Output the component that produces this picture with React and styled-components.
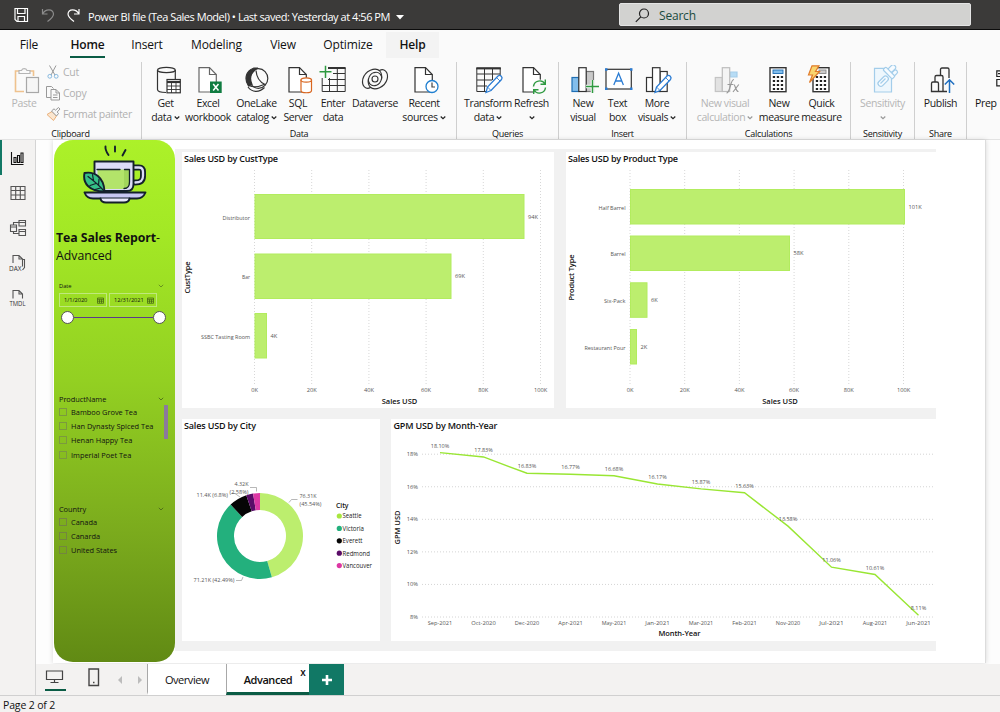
import React from "react";
import styled, { createGlobalStyle, css } from "styled-components";

const GlobalStyle = createGlobalStyle`
  * {
    box-sizing: border-box;
  }

  body {
    margin: 0;
    overflow: hidden;
    background: #f3f2f1;
    color: #111;
    font-family: "Open Sans", "Noto Sans", sans-serif;
  }
`;

const Window = styled.div`
  display: flex;
  flex-direction: column;
  width: 1000px;
  height: 712px;
  overflow: hidden;
`;

/* title bar */

const TitleBar = styled.header`
  display: flex;
  align-items: flex-start;
  flex: none;
  height: 30px;
  padding: 3px 0 0 13px;
  background: #3b3a39;
  border-bottom: 1px solid #0c0c0c;
  color: #fff;
`;

const TitleIcons = styled.div`
  display: flex;
  align-items: center;
  width: 75px;
  height: 24px;
`;

const FileName = styled.div`
  display: flex;
  align-items: center;
  gap: 6px;
  width: 531px;
  padding-top: 2px;
  line-height: 24px;
  font-size: 11px;
  letter-spacing: -0.46px;
  white-space: nowrap;
`;

const Search = styled.div`
  display: flex;
  align-items: center;
  gap: 9px;
  width: 352px;
  height: 23px;
  padding: 1px 0 0 15px;
  border: 1px solid #e4e4e4;
  border-radius: 2px;
  background: #d2d2d0;
  color: #1b4b3e;
  font-size: 12px;
  letter-spacing: -0.2px;
`;

/* ribbon */

const RibbonTabs = styled.nav`
  display: flex;
  flex: none;
  height: 29px;
  padding-top: 2px;
  background: #fafafa;
`;

const RibbonTab = styled.div`
  display: flex;
  justify-content: center;
  width: ${props => props.width}px;
  height: 26px;
  font-size: 12px;
  line-height: 25px;
  letter-spacing: -0.15px;
  background: ${props => (props.hovered ? "#f3f3f3" : "transparent")};
  font-weight: ${props => (props.active || props.hovered ? 600 : 400)};

  span {
    height: 26px;
    border-bottom: 2px solid ${props => (props.active ? "#0a5c45" : "transparent")};
  }
`;

const Ribbon = styled.div`
  display: flex;
  flex: none;
  height: 81px;
  padding-top: 3px;
  background: #fafafa;
  border-bottom: 1px solid #e3e3e3;
`;

const Group = styled.section`
  display: flex;
  flex: none;
  flex-direction: column;
  width: ${props => props.width}px;
  border-right: 1px solid #cfcfcf;
`;

const GroupButtons = styled.div`
  display: flex;
  flex: none;
  height: 67px;
  padding-left: ${props => props.indent || 0}px;
`;

const GroupLabel = styled.div`
  font-size: 9px;
  line-height: 10px;
  letter-spacing: -0.28px;
  text-align: center;
`;

const Button = styled.div`
  display: flex;
  flex: none;
  flex-direction: column;
  align-items: center;
  width: ${props => props.width}px;
  padding-top: 3px;
  font-size: 10.5px;
  line-height: 14px;
  letter-spacing: -0.38px;
  white-space: nowrap;
  color: ${props => (props.muted ? "#b5b5b5" : "#1a1a1a")};

  > svg {
    flex: none;
    margin-bottom: 1px;
  }
`;

const PrepButton = styled.div`
  display: flex;
  flex-direction: column;
  align-items: flex-end;
  width: 25px;
  padding-top: 3px;
  font-size: 10.5px;
  line-height: 14px;
  letter-spacing: -0.3px;

  > svg {
    margin-bottom: 1px;
  }

  > span {
    align-self: flex-start;
  }
`;

const Line = styled.div`
  display: flex;
  align-items: center;
  gap: 2px;
`;

const SmallButtons = styled.div`
  display: flex;
  flex-direction: column;
  margin-top: -1px;
`;

const SmallButton = styled.div`
  display: flex;
  align-items: center;
  gap: 2px;
  height: 21px;
  color: #b0b0b0;
  font-size: 10.5px;
  letter-spacing: -0.32px;
  white-space: nowrap;
`;

/* workspace */

const Workspace = styled.main`
  display: flex;
  flex: none;
  height: 555px;
`;

const Rail = styled.aside`
  width: 36px;
  flex: none;
  border-right: 1px solid #d4d4d4;
  background: #f3f2f1;
`;

const RailItem = styled.div`
  display: flex;
  align-items: center;
  height: 35px;
  padding-left: 5px;
  border-left: 2px solid ${props => (props.active ? "#117865" : "transparent")};
`;

const Editor = styled.div`
  display: flex;
  flex: 1;
  flex-direction: column;
`;

const Canvas = styled.div`
  height: 524px;
  padding: 0 14px 1px 17px;
  background: #fdfdfd;
`;

const Page = styled.div`
  display: flex;
  width: 933px;
  height: 523px;
  padding-left: 1px;
  background: #fff;
  border-right: 1px solid #dcdcdc;
  box-shadow: 0 0 5px rgba(0, 0, 0, 0.16);
`;

const Panel = styled.div`
  width: 121px;
  height: 522px;
  padding: 5px 2px 0;
  border-radius: 19px;
  background: linear-gradient(#acf129 0%, #a3e825 18%, #93d022 46%, #7bab1d 75%, #618a14 100%);
`;

const Cup = styled.div`
  display: flex;
  justify-content: center;
  height: 84px;
`;

const ReportTitle = styled.h1`
  margin: 0;
  font-size: 12.3px;
  font-weight: 700;
  line-height: 18px;
  letter-spacing: -0.08px;
  white-space: nowrap;

  span {
    font-weight: 400;
  }
`;

const ReportSubtitle = styled.div`
  font-size: 12.3px;
  line-height: 18px;
`;

const Slicer = styled.div`
  margin-top: ${props => props.gap}px;
  padding: 0 9px 0 3px;
`;

const SlicerHead = styled.div`
  display: flex;
  align-items: center;
  justify-content: space-between;
  height: 12px;
  font-size: ${props => props.size || 7.4}px;
  font-weight: 500;
  letter-spacing: -0.05px;
`;

const DateInputs = styled.div`
  display: flex;
  gap: 2px;
  padding-top: 1px;
`;

const DateInput = styled.div`
  display: flex;
  align-items: center;
  justify-content: space-between;
  width: 48px;
  height: 14px;
  padding: 0 2px 0 4px;
  border: 1px solid #bfe87c;
  font-size: 5.7px;
  letter-spacing: -0.05px;
`;

const Range = styled.div`
  display: flex;
  align-items: center;
  width: 107px;
  height: 13px;
  margin-top: 4px;
  padding-left: 2px;
`;

const Thumb = styled.span`
  width: 13px;
  height: 13px;
  border: 1px solid #555;
  border-radius: 50%;
  background: #fff;
`;

const Track = styled.span`
  flex: 1;
  height: 1.5px;
  background: #5b3a8c;
`;

const Options = styled.div`
  display: flex;
  justify-content: space-between;
  margin-right: -4px;
`;

const ScrollThumb = styled.span`
  width: 4px;
  height: 34px;
  background: #8b7a9b;
`;

const Option = styled.div`
  display: flex;
  align-items: center;
  gap: 4px;
  height: 14.2px;
  font-size: 7.4px;
  white-space: nowrap;
`;

const CheckBox = styled.span`
  width: 8px;
  height: 8px;
  border: 1px solid ${props => (props.dim ? "#73863f" : "#7b9a3e")};
`;

const Visuals = styled.div`
  display: flex;
  flex-direction: column;
  gap: 11px;
  width: 761px;
  height: 502px;
  margin: 9px 0 0;
  padding: 3px 0 0 7px;
  background: #f1f1f1;
`;

const VisualRow = styled.div`
  display: flex;
  gap: ${props => props.gap}px;
`;

const Card = styled.div`
  width: ${props => props.width}px;
  height: ${props => props.height}px;
  background: #fff;

  svg {
    display: block;
  }
`;

const ChartText = styled.text`
  font-family: "Open Sans", "Noto Sans", sans-serif;
  font-size: 5.7px;
  fill: #555;

  ${props =>
    props.$kind === "title" &&
    css`
      font-size: 9px;
      font-weight: 600;
      fill: #111;
    `};
  ${props =>
    props.$kind === "axis" &&
    css`
      font-size: 7.5px;
      font-weight: 600;
      fill: #111;
    `};
  ${props =>
    props.$kind === "legend" &&
    css`
      font-size: 6.3px;
      fill: #222;
    `};
`;

const PageTabs = styled.div`
  display: flex;
  height: 31px;
  background: #f3f2f1;
`;

const PageTools = styled.div`
  display: flex;
  align-items: center;
  width: 111px;
  padding-left: 1px;
`;

const PageTab = styled.div`
  display: flex;
  justify-content: center;
  width: ${props => props.width}px;
  border-left: 1px solid #a8a8a8;
  border-bottom: 3px solid ${props => (props.active ? "#0a5c45" : "#fff")};
  background: #fff;
  font-size: 11px;
  line-height: 32px;
  letter-spacing: -0.45px;
  font-weight: ${props => (props.active ? 600 : 400)};
`;

const CloseMark = styled.span`
  width: 0;
  height: 10px;
  line-height: 17px;
  font-size: 10px;
  text-indent: 8px;
`;

const AddTab = styled.div`
  display: flex;
  align-items: center;
  justify-content: center;
  width: 35px;
  background: #117865;
`;

const StatusBar = styled.footer`
  flex: 1;
  padding: 3px 0 0 3px;
  border-top: 1px solid #d0d0d0;
  background: #f3f2f1;
  font-size: 10.5px;
  line-height: 13px;
  letter-spacing: -0.15px;
`;

/* icons */

const Chevron = ({ color }) => (
  <svg width="6" height="4" viewBox="0 0 6 4" fill="none">
    <path d="M0.8 0.8 3 3 5.2 0.8" stroke={color} strokeWidth="0.8" />
  </svg>
);

const Icon = ({ children }) => (
  <svg width="36" height="30" viewBox="0 0 36 30" fill="none" stroke="#333" strokeWidth="1.2">
    {children}
  </svg>
);

const Doc = ({ color = "#333" }) => (
  <g stroke={color}>
    <path d="M9 2.7H19.5L26.3 9.5V27H9Z" fill="#fff" />
    <path d="M19.5 2.7V9.5H26.3" />
  </g>
);

const Pencil = () => (
  <g stroke="#2b7cd3" strokeWidth="1.3">
    <path d="M16 27.5 17.5 22 28 11a2.5 2.5 0 0 1 3.5 3.5L21 25.5Z" fill="#fff" />
    <path d="M17.5 22 21 25.5M26.5 12.5l3.5 3.5" strokeWidth="0.9" />
  </g>
);

const PasteIcon = () => (
  <Icon>
    <path d="M18 26.5H9.5V6H13M24 6H27.5V11" stroke="#efc28e" strokeWidth="1.6" />
    <path d="M13 8.5V5.5H15.5a3 3 0 0 1 5.5 0H24V8.5Z" stroke="#b5b5b5" />
    <rect x="20.5" y="12.5" width="12" height="15" stroke="#a8a8a8" fill="#f6f6f6" />
  </Icon>
);

const GetDataIcon = () => (
  <Icon>
    <path d="M9.5 5V24.5C9.5 26.3 13 27.5 18 27.5M27.3 5V14" />
    <ellipse cx="18.4" cy="5" rx="8.9" ry="2.7" />
    <rect x="19" y="14.5" width="13.3" height="13.3" fill="#fff" />
    <path d="M19 17H32.3" strokeWidth="2.2" />
    <path d="M23.5 17V28M28 17V28M19 21H32M19 24.5H32" strokeWidth="0.9" />
  </Icon>
);

const ExcelIcon = () => (
  <Icon>
    <Doc color="#666" />
    <rect x="20" y="16.5" width="11.7" height="11.5" fill="#107c41" stroke="none" />
    <path d="M23.2 19 28.5 25.5M28.5 19 23.2 25.5" stroke="#fff" strokeWidth="1.5" />
  </Icon>
);

const OneLakeIcon = () => (
  <Icon>
    <path d="M14.5 3.2C7.5 5.5 4.5 13.5 9.5 21L13 19.5C10 13 12 7 19 3Z" fill="#333" />
    <ellipse cx="19.5" cy="13.5" rx="9.3" ry="9.8" />
    <path d="M10 20.5C15 23 22 21 26.5 19M17 5.5C17.5 12 20.5 17 26 19.5M9 22C13 27.5 20 28 25.5 22.5" />
  </Icon>
);

const SqlIcon = () => (
  <Icon>
    <Doc />
    <path d="M21 15V25.5C21 28.5 31.5 28.5 31.5 25.5V15Z" fill="#fff" stroke="#d9661f" />
    <ellipse cx="26.25" cy="15" rx="5.25" ry="2.2" fill="#fff" stroke="#d9661f" />
  </Icon>
);

const EnterIcon = () => (
  <Icon>
    <path
      d="M18 2.8H30.2V26.5H7.2V13M18 8.5H30M13 14.5H30M7 20.5H30M14.5 13V26.5M22.3 2.8V26.5"
      strokeWidth="1"
    />
    <path d="M13 3H30.5" strokeWidth="2" />
    <path d="M10.5 0.8V13M4.5 6.8H16.5" stroke="#2f9a41" strokeWidth="1.5" />
  </Icon>
);

const DataverseIcon = () => (
  <Icon>
    <g strokeWidth="1.1">
      <path d="M23 6C18 1.5 8 6 5.8 14C4.3 21 9 25 13.5 22.5C9.5 18 11 9.5 17 7.6C22 6.3 25.5 10 24.5 14.5" />
      <path d="M13 22C18 26.500 28 22 30.200 14C31.700 7 27 3 22.500 5.500C26.500 10 25 18.500 19 20.400C14 21.700 10.500 18 11.500 13.500" />
      <circle cx="18" cy="14" r="3" />
    </g>
  </Icon>
);

const RecentIcon = () => (
  <Icon>
    <Doc />
    <circle cx="26" cy="21.5" r="6" fill="#fff" stroke="#1f7fd0" strokeWidth="1.3" />
    <path d="M26 17.5V22H29" stroke="#444" />
  </Icon>
);

const TransformIcon = () => (
  <Icon>
    <path d="M6.8 3V26.5H16M30.2 3V11M7 9H30M7 15H22M7 21H17M14.5 4V26.5M22.5 4V15" strokeWidth="1" />
    <path d="M6.3 3.3H30.8" strokeWidth="2.2" />
    <Pencil />
  </Icon>
);

const RefreshIcon = () => (
  <Icon>
    <Doc />
    <circle cx="25.5" cy="22" r="7.5" fill="#fafafa" stroke="none" />
    <path
      d="M19.5 21.5a6.2 6.2 0 0 1 11.5-2.5M31.5 22.5a6.2 6.2 0 0 1-11.5 2.5M31.3 14.5V19.3H26.5M19.7 29V24.8H24.5"
      stroke="#2f9a41"
      strokeWidth="1.4"
    />
  </Icon>
);

const NewVisualIcon = () => (
  <Icon>
    <rect x="7" y="12.5" width="6.8" height="14" fill="#83beec" stroke="#1f6fb5" />
    <rect x="21" y="6.5" width="7.5" height="20" fill="#c9c9c9" stroke="#777" />
    <rect x="13.8" y="2.7" width="7.4" height="23.8" fill="#fff" />
    <path d="M27.5 15V28M21 21.5H34" stroke="#fafafa" strokeWidth="3.5" />
    <path d="M27.5 15V28M21 21.5H34" stroke="#2f9a41" strokeWidth="1.5" />
  </Icon>
);

const TextBoxIcon = () => (
  <Icon>
    <rect x="6" y="4.3" width="25.3" height="19.7" fill="#fff" />
    <path d="M13.8 20 18.6 8.3 23.4 20M15.3 16H21.9" stroke="#2b7cd3" strokeWidth="1.3" />
    <path
      d="M5 3.3h2.5v2.5H5ZM30 3.3h2.5v2.5H30ZM5 22.5h2.5V25H5ZM30 22.5h2.5V25H30Z"
      fill="#2b7cd3"
      stroke="none"
    />
  </Icon>
);

const MoreVisualsIcon = () => (
  <Icon>
    <rect x="7.5" y="12.5" width="6" height="14" fill="#fff" />
    <rect x="21" y="6.5" width="7.2" height="20" fill="#fff" />
    <rect x="13.5" y="2.7" width="7.5" height="23.8" fill="#fff" />
    <Pencil />
  </Icon>
);

const VisualCalcIcon = () => (
  <Icon>
    <rect x="8.3" y="12.5" width="7" height="14" fill="#e2e2e2" stroke="#c4c4c4" />
    <path d="M23 7H30V12H23Z" fill="#b7dcf5" stroke="#a5cdea" />
    <rect x="15.3" y="2.7" width="7.4" height="23.8" fill="#f4f4f4" stroke="#bdbdbd" />
    <path
      d="M19.5 28c4 0 3.7-14 7.5-13.5M20.5 19.5H26M26.5 19.5C28.5 19 28.5 27 31.5 26.5M31.8 19.5 26 27"
      stroke="#999"
      strokeWidth="1.2"
    />
  </Icon>
);

const Calculator = () => (
  <g>
    <rect x="9" y="2.7" width="16" height="24" fill="#fff" strokeWidth="1.4" />
    <g fill="#222" stroke="none">
      {[11, 15, 19, 23].map(y =>
        [11.8, 15.8, 19.8].map(x => <rect key={`${x}-${y}`} x={x} y={y} width="2.3" height="2" />)
      )}
    </g>
  </g>
);

const MeasureIcon = () => (
  <Icon>
    <Calculator />
    <rect x="12" y="5" width="10" height="3.5" fill="#83beec" stroke="#1f6fb5" strokeWidth="0.9" />
  </Icon>
);

const QuickIcon = () => (
  <Icon>
    <Calculator />
    <rect x="15" y="5" width="7" height="3.5" fill="#ccc" stroke="#888" strokeWidth="0.9" />
    <path d="M8 0.8H15L11.5 6.5H15.5L5.5 17.5 8.5 10H4.5Z" fill="#f9d56e" stroke="#e07b2a" />
  </Icon>
);

const SensitivityIcon = () => (
  <Icon>
    <path d="M20 3.3H9.5V27H26.5V14" fill="#eef7fd" stroke="#a3cdea" />
    <g stroke="#a3cdea" fill="#f6fbff">
      <rect x="12" y="13.5" width="12" height="5.5" rx="2.5" transform="rotate(-45 18 16)" />
      <path d="M15.5 18.5l5-5" />
      <rect x="23" y="1" width="8" height="5" rx="2" transform="rotate(-45 27 3.5)" />
      <rect x="25" y="6.5" width="8" height="4" rx="1.8" transform="rotate(-45 29 8.5)" />
      <rect x="17.5" y="6" width="13" height="4" rx="1" transform="rotate(45 24 8)" />
    </g>
  </Icon>
);

const PublishIcon = () => (
  <Icon>
    <path
      d="M8.5 26.5V18.5q0-1.5 1.5-1.5H14q1.5 0 1.5 1.5V26.5ZM12 17V12q0-1.5 1.5-1.5H18.5q1.5 0 1.5 1.5V26.5H15.5M17.5 10.5V4.5q0-1.5 1.5-1.5H24.5q1.5 0 1.5 1.5V13M20 26.5H24"
      strokeWidth="1.3"
    />
    <path d="M26.5 28V15M21.8 19.5 26.5 14.8 31.2 19.5" stroke="#1f6fc0" strokeWidth="1.5" />
  </Icon>
);

const PrepIcon = () => (
  <svg width="4" height="30" viewBox="0 0 4 30" fill="none" stroke="#222" strokeWidth="1.2">
    <path d="M4 5.8H0.8V11.5H4M2 8.7H4M4 14.5H0.8V20.8H4" />
  </svg>
);

const CutIcon = () => (
  <svg width="16" height="16" viewBox="0 0 16 16" fill="none" stroke="#999">
    <path d="M4.5 1.5 10 11M11 1.5 6 11" />
    <circle cx="4.8" cy="12.3" r="1.9" stroke="#86b9e0" />
    <circle cx="11.2" cy="12.3" r="1.9" stroke="#86b9e0" />
  </svg>
);

const CopyIcon = () => (
  <svg width="16" height="16" viewBox="0 0 16 16" fill="none" stroke="#999">
    <path d="M6 12.5H1.5V1.5H6.5L8.5 3.5" />
    <path d="M6 4.5H11L14.5 8V15H6ZM11 4.5V8H14.5M8 10h4.5M8 12.5h4.5" />
  </svg>
);

const PainterIcon = () => (
  <svg width="16" height="16" viewBox="0 0 16 16" fill="none" stroke="#999">
    <path d="M2 8.5 7 5.5 11.5 10 8.5 14.5Z" stroke="#eab07a" fill="#fbe6cf" />
    <path d="M6.5 5 9 2.8 10.5 4.2 13.5 1.5 15 3 12.2 6 13.5 7.5 11.5 10Z" fill="#f6f6f6" />
  </svg>
);

/* charts */

const BarChart = ({ width, title, axis, axisLength, titleLength, zero, tick, rows, axisX }) => (
  <svg width={width} height="256" viewBox={`0 0 ${width} 256`}>
    <ChartText $kind="title" x="2" y="9.5" textLength={titleLength}>
      {title}
    </ChartText>
    {[0, 20, 40, 60, 80, 100].map((value, i) => (
      <g key={value}>
        <line
          x1={zero + tick * i}
          x2={zero + tick * i}
          y1="18"
          y2="232"
          stroke="#d2d2d2"
          strokeWidth="0.9"
          strokeDasharray="1 2"
        />
        <ChartText x={zero + tick * i} y="240" textAnchor="middle">
          {value}K
        </ChartText>
      </g>
    ))}
    {rows.map(row => (
      <g key={row.name}>
        <rect
          x={zero + 0.5}
          y={row.y + 0.5}
          width={row.size - 1}
          height={row.height - 1}
          fill="#bcee6e"
          stroke="#b2ec5e"
        />
        <ChartText
          x={zero - 4.5}
          y={row.y + row.height / 2 + 3}
          textAnchor="end"
          textLength={row.length}
          lengthAdjust="spacingAndGlyphs"
        >
          {row.name}
        </ChartText>
        <ChartText x={zero + row.size + 3.5} y={row.y + row.height / 2 + 2}>
          {row.value}
        </ChartText>
      </g>
    ))}
    <ChartText $kind="axis" x={axisX} y="251.5" textAnchor="middle" textLength="35.5">
      Sales USD
    </ChartText>
    <ChartText
      $kind="axis"
      transform="translate(8 125.5) rotate(-90)"
      textAnchor="middle"
      textLength={axisLength}
    >
      {axis}
    </ChartText>
  </svg>
);

const custTypes = [
  { name: "Distributor", value: "94K", size: 270, y: 42, height: 45, length: 27.5 },
  { name: "Bar", value: "69K", size: 197, y: 101.5, height: 45.5, length: 8 },
  { name: "SSBC Tasting Room", value: "4K", size: 12.5, y: 161, height: 45.5, length: 49 }
];

const productTypes = [
  { name: "Half Barrel", value: "101K", size: 275, y: 37, height: 35.5, length: 27 },
  { name: "Barrel", value: "58K", size: 160, y: 83.5, height: 35.5, length: 15 },
  { name: "Six-Pack", value: "6K", size: 17.5, y: 130.3, height: 35.5, length: 21.5 },
  { name: "Restaurant Pour", value: "2K", size: 7, y: 177, height: 35.5, length: 41 }
];

const cities = [
  { name: "Seattle", share: 45.54, color: "#bcee6e", dot: "#a8e63f", length: 19 },
  { name: "Victoria", share: 42.49, color: "#23b07d", length: 21.5 },
  { name: "Everett", share: 6.8, color: "#050505", length: 20 },
  { name: "Redmond", share: 2.59, color: "#5a0c68", length: 27.5 },
  { name: "Vancouver", share: 2.58, color: "#dd37a4", length: 29.5 }
];

const cityLabels = [
  { text: "76.31K", x: 117.5, y: 79, length: 17 },
  { text: "(45.54%)", x: 117.5, y: 87, length: 22 },
  { text: "71.21K (42.49%)", x: 11.5, y: 163, length: 41 },
  { text: "11.4K (6.8%)", x: 14.5, y: 77.5, length: 31.5 },
  { text: "4.32K", x: 52.5, y: 67, length: 14 },
  { text: "(2.58%)", x: 47.5, y: 74.5, length: 19 }
];

const slicePath = (start, share) => {
  const point = (angle, radius) =>
    `${78 + radius * Math.sin(angle)} ${117 - radius * Math.cos(angle)}`;
  const from = (start / 100) * Math.PI * 2;
  const to = ((start + share) / 100) * Math.PI * 2;
  return `M${point(from, 43)} A43 43 0 0 1 ${point(to, 43)} L${point(to, 26)} A26 26 0 0 0 ${point(from, 26)}Z`;
};

const CityChart = () => {
  let total = 0;
  return (
    <svg width="198" height="222" viewBox="0 0 198 222">
      <ChartText $kind="title" x="2" y="10" textLength="72">
        Sales USD by City
      </ChartText>
      {cities.map(city => {
        const start = total;
        total += city.share;
        return <path key={city.name} d={slicePath(start, city.share)} fill={city.color} />;
      })}
      <path
        d="M107 83.5 109.5 80.5H115.5M54 161.5H59.5L61 158M68 68.5H74.5V72.5M49.5 74.5H53L58 78"
        fill="none"
        stroke="#999"
        strokeWidth="0.7"
      />
      {cityLabels.map(label => (
        <ChartText
          key={label.text}
          x={label.x}
          y={label.y}
          textLength={label.length}
          lengthAdjust="spacingAndGlyphs"
        >
          {label.text}
        </ChartText>
      ))}
      <ChartText $kind="axis" x="154" y="89" textLength="12.5" lengthAdjust="spacingAndGlyphs">
        City
      </ChartText>
      {cities.map((city, i) => (
        <g key={city.name}>
          <circle cx="157.3" cy={97 + i * 12.4} r="2.6" fill={city.dot || city.color} />
          <ChartText
            $kind="legend"
            x="160.5"
            y={99.3 + i * 12.4}
            textLength={city.length}
            lengthAdjust="spacingAndGlyphs"
          >
            {city.name}
          </ChartText>
        </g>
      ))}
    </svg>
  );
};

const months = [
  ["Sep-2021", 18.1],
  ["Oct-2020", 17.83],
  ["Dec-2020", 16.83],
  ["Apr-2021", 16.77],
  ["May-2021", 16.68],
  ["Jan-2021", 16.17],
  ["Mar-2021", 15.87],
  ["Feb-2021", 15.63],
  ["Nov-2020", 13.58],
  ["Jul-2021", 11.06],
  ["Aug-2021", 10.61],
  ["Jun-2021", 8.11]
];

const monthX = i => 49 + i * 43.5;
const percentY = value => 198 - (value - 8) * 16.28;

const MonthChart = () => (
  <svg width="545" height="222" viewBox="0 0 545 222">
    <ChartText $kind="title" x="2.5" y="10" textLength="104">
      GPM USD by Month-Year
    </ChartText>
    {[18, 16, 14, 12, 10, 8].map(value => (
      <g key={value}>
        <line
          x1="31"
          x2="544"
          y1={percentY(value)}
          y2={percentY(value)}
          stroke="#cfcfcf"
          strokeWidth="0.9"
          strokeDasharray="1 2"
        />
        <ChartText x="27" y={percentY(value) + 2} textAnchor="end">
          {value}%
        </ChartText>
      </g>
    ))}
    <polyline
      points={months.map(([, value], i) => `${monthX(i)},${percentY(value)}`).join(" ")}
      fill="none"
      stroke="#99e633"
      strokeWidth="1.4"
    />
    {months.map(([name, value], i) => (
      <g key={name}>
        <ChartText
          x={monthX(i)}
          y={percentY(value) - 5}
          textAnchor="middle"
          textLength={value < 10 ? 15.5 : 18.5}
          lengthAdjust="spacingAndGlyphs"
        >
          {value.toFixed(2)}%
        </ChartText>
        <ChartText
          x={monthX(i)}
          y="206"
          textAnchor="middle"
          textLength="24.5"
          lengthAdjust="spacingAndGlyphs"
        >
          {name}
        </ChartText>
      </g>
    ))}
    <ChartText $kind="axis" x="288.5" y="217" textAnchor="middle" textLength="42">
      Month-Year
    </ChartText>
    <ChartText $kind="axis" transform="translate(9 108.5) rotate(-90)" textAnchor="middle" textLength="34">
      GPM USD
    </ChartText>
  </svg>
);

const TeaCup = () => (
  <svg
    width="66"
    height="62"
    viewBox="0 0 66 62"
    fill="none"
    stroke="#14202c"
    strokeWidth="1.9"
    strokeLinecap="round"
    strokeLinejoin="round"
  >
    <path d="M23.5 1.5C23 5 24.5 7 26.5 10M33 1.5V6.5M43.5 5 40.5 10.5" />
    <path d="M52 22.5H57C60 22.5 61 24 61 27V31C61 35.5 59 37.5 53 37.5" strokeWidth="6" />
    <path
      d="M52 22.5H57C60 22.5 61 24 61 27V31C61 35.5 59 37.5 53 37.5"
      stroke="#dcdcf8"
      strokeWidth="2.3"
    />
    <path d="M12.5 16.5H51.5V39C51.5 43 49.5 46 45 46H22L12.5 34Z" fill="#dcdcf8" />
    <path d="M15.5 24.5H47.5V37C47.5 41 46 44 42 44H22L15.5 34Z" fill="#b3e46a" stroke="none" />
    <path d="M42 24.5H47.5V37C47.5 41 46 44 42 44Z" fill="#a2d65b" stroke="none" />
    <path d="M15 24.5H38M42.5 24.5H47.5V37C47.5 41 46 43.5 42 43.5" strokeWidth="1.3" />
    <path d="M2.5 47.5H63.5C62 51 60 53.5 55 53.5H11C6.5 53.5 4 51.5 2.5 47.5Z" fill="#c7c7f2" />
    <path d="M18.5 53.5C19 56.5 21 57.5 24 57.5H42C45.5 57.5 47 56.5 47.5 53.5" fill="#e8e8fb" />
    <path d="M2.5 28C12 26 22 32 22.5 46.5C7 46.5 0.5 38 2.5 28Z" fill="#35c088" />
    <path
      d="M6 31.5C12 36 17 40 22 46M8 40.5 14 38.5M10.5 29.5 11.5 35.5M17 34 16.5 40.5M13 44.5 18.5 43"
      strokeWidth="1.2"
    />
  </svg>
);

const CalendarIcon = () => (
  <svg width="7" height="7" viewBox="0 0 7 7" fill="none" stroke="#3f5a14" strokeWidth="0.7">
    <path d="M0.5 1H6.5V6.3H0.5ZM0.5 2.3H6.5M2.5 2.5V6M4.5 2.5V6M0.5 4.2H6.5" />
  </svg>
);

/* ribbon content */

const groups = [
  {
    label: "Data",
    width: 315,
    indent: 6,
    buttons: [
      { width: 35, icon: GetDataIcon, lines: ["Get", "data"], menu: true },
      { width: 50, icon: ExcelIcon, lines: ["Excel", "workbook"] },
      { width: 47, icon: OneLakeIcon, lines: ["OneLake", "catalog"], menu: true },
      { width: 36, icon: SqlIcon, lines: ["SQL", "Server"] },
      { width: 34, icon: EnterIcon, lines: ["Enter", "data"] },
      { width: 50, icon: DataverseIcon, lines: ["Dataverse"] },
      { width: 48, icon: RecentIcon, lines: ["Recent", "sources"], menu: true }
    ]
  },
  {
    label: "Queries",
    width: 102,
    indent: 6,
    buttons: [
      { width: 50, icon: TransformIcon, lines: ["Transform", "data"], menu: true },
      { width: 37, icon: RefreshIcon, lines: ["Refresh", ""], menu: true }
    ]
  },
  {
    label: "Insert",
    width: 128,
    indent: 9,
    buttons: [
      { width: 30, icon: NewVisualIcon, lines: ["New", "visual"] },
      { width: 39, icon: TextBoxIcon, lines: ["Text", "box"] },
      { width: 40, icon: MoreVisualsIcon, lines: ["More", "visuals"], menu: true }
    ]
  },
  {
    label: "Calculations",
    width: 164,
    indent: 3,
    buttons: [
      { width: 70, icon: VisualCalcIcon, lines: ["New visual", "calculation"], menu: true, muted: true },
      { width: 38, icon: MeasureIcon, lines: ["New", "measure"] },
      { width: 47, icon: QuickIcon, lines: ["Quick", "measure"] }
    ]
  },
  {
    label: "Sensitivity",
    width: 64,
    buttons: [{ width: 63, icon: SensitivityIcon, lines: ["Sensitivity", ""], menu: true, muted: true }]
  },
  {
    label: "Share",
    width: 52,
    buttons: [{ width: 51, icon: PublishIcon, lines: ["Publish"] }]
  }
];

const RibbonButton = ({ width, icon: ButtonIcon, lines, menu, muted }) => (
  <Button width={width} muted={muted}>
    <ButtonIcon />
    {lines.map((line, i) => (
      <Line key={i}>
        {line}
        {menu && i === lines.length - 1 && (
          <svg width="6" height="14" viewBox="0 0 6 14" fill="none">
            <path
              d="M0.7 6.5 3 8.7 5.3 6.5"
              stroke={muted ? "#999" : "#222"}
              strokeWidth="1.2"
            />
          </svg>
        )}
      </Line>
    ))}
  </Button>
);

const tabs = [
  { name: "File", width: 58 },
  { name: "Home", width: 59, active: true },
  { name: "Insert", width: 60 },
  { name: "Modeling", width: 79 },
  { name: "View", width: 54 },
  { name: "Optimize", width: 76 },
  { name: "Help", width: 53, hovered: true }
];

const RailIcon = ({ children }) => (
  <svg width="20" height="20" viewBox="0 0 20 20" fill="none" stroke="#555" strokeWidth="1.1">
    {children}
  </svg>
);

const RailText = styled.text`
  font-family: "Open Sans", sans-serif;
  font-size: 6.5px;
  fill: #333;
  stroke: none;
`;

const App = () => (
  <>
    <GlobalStyle />
    <Window>
      <TitleBar>
        <TitleIcons>
          <svg width="75" height="24" viewBox="0 0 75 24" fill="none" stroke="#fff" strokeWidth="1.2">
            <path d="M2 5.5H14.5V18.5H4L2 16.5ZM4.5 5.5V10.5H12V5.5M5 18.5V13.5H11.5V18.5" />
            <path
              d="M29.5 6V11H34.5M29.5 11C32.5 5.5 40 5.5 40.5 11C40.5 14 38 16 34.5 18.5"
              stroke="#8b8b8b"
            />
            <path d="M66 6V11H61M66 11C63 5.5 55.5 5.5 55 11C55 14 57.5 16 61 18.5" />
          </svg>
        </TitleIcons>
        <FileName>
          Power BI file (Tea Sales Model) • Last saved: Yesterday at 4:56 PM
          <svg width="8" height="5" viewBox="0 0 8 5">
            <path d="M0 0H8L4 4.5Z" fill="#fff" />
          </svg>
        </FileName>
        <Search>
          <svg width="15" height="15" viewBox="0 0 15 15" fill="none" stroke="#222" strokeWidth="1.2">
            <circle cx="9" cy="5.5" r="4.5" />
            <path d="M5.8 8.8 0.8 13.8" />
          </svg>
          Search
        </Search>
      </TitleBar>

      <RibbonTabs>
        {tabs.map(tab => (
          <RibbonTab key={tab.name} width={tab.width} active={tab.active} hovered={tab.hovered}>
            <span>{tab.name}</span>
          </RibbonTab>
        ))}
      </RibbonTabs>

      <Ribbon>
        <Group width={142}>
          <GroupButtons indent={3}>
            <Button width={42} muted>
              <PasteIcon />
              <Line>Paste</Line>
            </Button>
            <SmallButtons>
              <SmallButton>
                <CutIcon />
                Cut
              </SmallButton>
              <SmallButton>
                <CopyIcon />
                Copy
              </SmallButton>
              <SmallButton>
                <PainterIcon />
                Format painter
              </SmallButton>
            </SmallButtons>
          </GroupButtons>
          <GroupLabel>Clipboard</GroupLabel>
        </Group>
        {groups.map(group => (
          <Group key={group.label} width={group.width}>
            <GroupButtons indent={group.indent}>
              {group.buttons.map(button => (
                <RibbonButton key={button.lines.join(" ")} {...button} />
              ))}
            </GroupButtons>
            <GroupLabel>{group.label}</GroupLabel>
          </Group>
        ))}
        <GroupButtons indent={8}>
          <PrepButton>
            <PrepIcon />
            <span>Prep</span>
          </PrepButton>
        </GroupButtons>
      </Ribbon>

      <Workspace>
        <Rail>
          <RailItem active>
            <RailIcon>
              <path
                d="M4.5 4V16.5H16.5M7 9.5H9V14.5H7ZM10.5 7.5H12.5V14.5H10.5ZM14 5H16V14.5H14Z"
                stroke="#111"
              />
            </RailIcon>
          </RailItem>
          <RailItem>
            <RailIcon>
              <path d="M4 3.5H18V16.5H4ZM4 7.5H18M4 12H18M8.7 3.5V16.5M13.3 3.5V16.5" />
            </RailIcon>
          </RailItem>
          <RailItem>
            <RailIcon>
              <path d="M12 2.5H18.5V8H12ZM12 11.5H18.5V17.5H12ZM3.5 7H9.5V13.5H3.5ZM6.5 7V4.5H18M6.5 13.5V15.5H12M3.5 9H9.5M12 13.5H18" />
            </RailIcon>
          </RailItem>
          <RailItem>
            <RailIcon>
              <path d="M6 10V2.5H12L15.5 6V13.5M12 2.5V6H15.5" />
              <RailText x="2" y="17.5" textLength="12.5" lengthAdjust="spacingAndGlyphs">
                DAX
              </RailText>
              <path d="M15.5 6.5H17.5V14.5L15.5 17" />
            </RailIcon>
          </RailItem>
          <RailItem>
            <RailIcon>
              <path d="M6 10.5V2.5H12L15.5 6V10.5M12 2.5V6H15.5" />
              <RailText x="2.5" y="17.5" textLength="16" lengthAdjust="spacingAndGlyphs">
                TMDL
              </RailText>
            </RailIcon>
          </RailItem>
        </Rail>

        <Editor>
          <Canvas>
            <Page>
              <Panel>
                <Cup>
                  <TeaCup />
                </Cup>
                <ReportTitle>
                  Tea Sales Report<span>-</span>
                </ReportTitle>
                <ReportSubtitle>Advanced</ReportSubtitle>
                <Slicer gap={15}>
                  <SlicerHead size={5.8}>
                    Date
                    <Chevron color="#5b7d1e" />
                  </SlicerHead>
                  <DateInputs>
                    <DateInput>
                      1/1/2020
                      <CalendarIcon />
                    </DateInput>
                    <DateInput>
                      12/31/2021
                      <CalendarIcon />
                    </DateInput>
                  </DateInputs>
                  <Range>
                    <Thumb />
                    <Track />
                    <Thumb />
                  </Range>
                </Slicer>
                <Slicer gap={69}>
                  <SlicerHead>
                    ProductName
                    <Chevron color="#46611a" />
                  </SlicerHead>
                  <Options>
                    <div>
                      {["Bamboo Grove Tea", "Han Dynasty Spiced Tea", "Henan Happy Tea", "Imperial Poet Tea"].map(
                        name => (
                          <Option key={name}>
                            <CheckBox />
                            {name}
                          </Option>
                        )
                      )}
                    </div>
                    <ScrollThumb />
                  </Options>
                </Slicer>
                <Slicer gap={41}>
                  <SlicerHead>
                    Country
                    <Chevron color="#46611a" />
                  </SlicerHead>
                  {["Canada", "Canarda", "United States"].map(name => (
                    <Option key={name}>
                      <CheckBox dim />
                      {name}
                    </Option>
                  ))}
                </Slicer>
              </Panel>

              <Visuals>
                <VisualRow gap={12}>
                  <Card width={372} height={256}>
                    <BarChart
                      width={372}
                      title="Sales USD by CustType"
                      titleLength={94}
                      axis="CustType"
                      axisLength={32}
                      axisX={217.5}
                      zero={72.5}
                      tick={57.2}
                      rows={custTypes}
                    />
                  </Card>
                  <Card width={370} height={256}>
                    <BarChart
                      width={370}
                      title="Sales USD by Product Type"
                      titleLength={110}
                      axis="Product Type"
                      axisLength={46}
                      axisX={214}
                      zero={64}
                      tick={54.7}
                      rows={productTypes}
                    />
                  </Card>
                </VisualRow>
                <VisualRow gap={11}>
                  <Card width={198} height={222}>
                    <CityChart />
                  </Card>
                  <Card width={545} height={222}>
                    <MonthChart />
                  </Card>
                </VisualRow>
              </Visuals>
            </Page>
          </Canvas>

          <PageTabs>
            <PageTools>
              <svg width="110" height="31" viewBox="0 0 110 31" fill="none" stroke="#444" strokeWidth="1.2">
                <path d="M9.5 7H25.5V15.5H9.5ZM17.5 15.5V18.5M13.5 18.5H21.5" />
                <path d="M8 26H29" stroke="#0a5c45" strokeWidth="2" />
                <path d="M52 5H61.5V21.5H52ZM56 18.5H57.5" strokeWidth="1.4" />
                <path d="M85 12V20L81 16ZM101 12V20L105 16Z" fill="#bcbcbc" stroke="none" />
              </svg>
            </PageTools>
            <PageTab width={79}>Overview</PageTab>
            <PageTab width={83} active>
              Advanced
              <CloseMark>x</CloseMark>
            </PageTab>
            <AddTab>
              <svg width="12" height="12" viewBox="0 0 12 12">
                <path d="M6 1V11M1 6H11" stroke="#fff" strokeWidth="2.6" />
              </svg>
            </AddTab>
          </PageTabs>
        </Editor>
      </Workspace>

      <StatusBar>Page 2 of 2</StatusBar>
    </Window>
  </>
);

export default App;
